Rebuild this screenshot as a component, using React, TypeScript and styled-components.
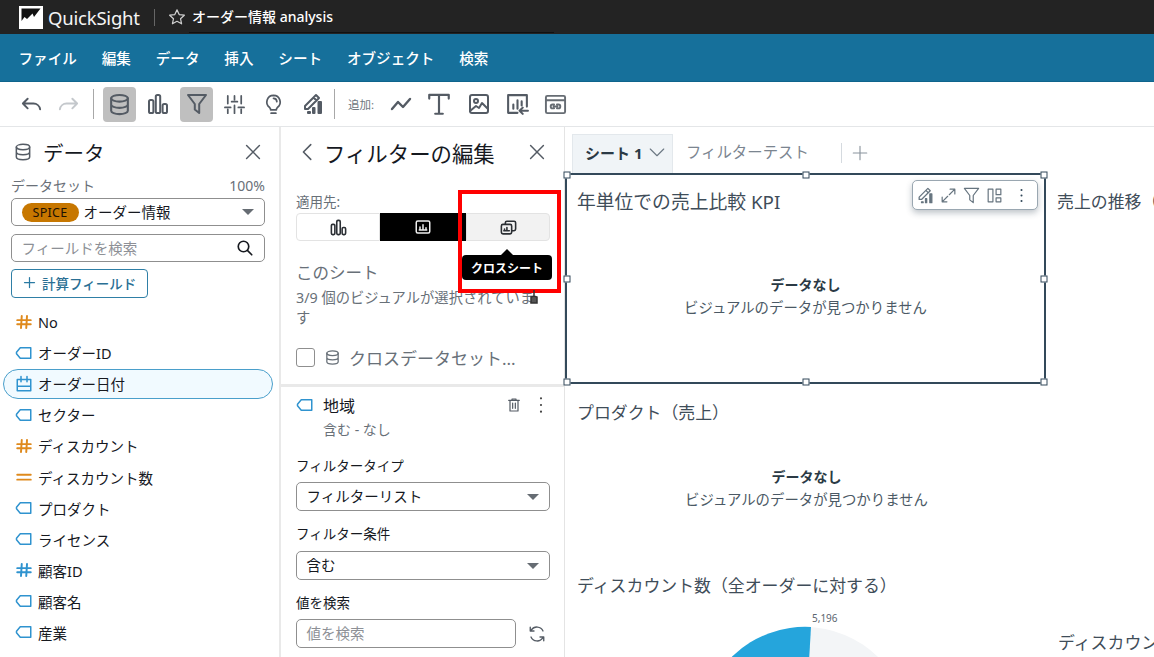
import React from "react";
import styled, { createGlobalStyle } from "styled-components";

const GlobalStyle = createGlobalStyle`
  html, body { margin: 0; padding: 0; background: #fff; }
  body {
    font-family: "Noto Sans", "Noto Sans CJK JP", sans-serif;
    color: #16191f;
    overflow: hidden;
  }
  * { box-sizing: border-box; }
`;

const Page = styled.div`
  position: relative;
  width: 1154px;
  height: 657px;
  overflow: hidden;
  display: flex;
  flex-direction: column;
`;

/* top bars */
const TopBar = styled.div`
  height: 34px;
  flex: none;
  background: #232323;
  display: flex;
  align-items: center;
  padding-left: 19px;
  color: #fff;
`;
const Brand = styled.span`
  font-size: 18.5px;
  margin-left: 5px;
  width: 106px;
  letter-spacing: -0.2px;
  color: #f4f4f4;
`;
const TopDivider = styled.span`
  width: 1px;
  height: 17px;
  background: #666;
  margin-right: 13px;
`;
const TitleWrap = styled.div`
  margin-left: 3px;
  width: 365px;
  height: 31px;
  line-height: 30px;
  font-size: 14px;
  font-weight: 500;
  margin-top: 1px;
  border-bottom: 1px solid #111;
  padding-left: 3px;
`;
const MenuBar = styled.div`
  height: 48px;
  flex: none;
  background: #16709b;
  display: flex;
  align-items: center;
  padding-left: 18.5px;
  gap: 24.8px;
  border-bottom: 1px solid #0f648c;
`;
const MenuItem = styled.span`
  color: #fff;
  font-size: 14.6px;
  font-weight: 500;
`;
const Toolbar = styled.div`
  height: 45px;
  flex: none;
  display: flex;
  align-items: center;
  border-bottom: 1px solid #e4e6e8;
  padding-left: 12px;
`;
const ToolSlot = styled.span<{ $w: number; $active?: boolean }>`
  width: ${(p) => p.$w}px;
  height: 35px;
  flex: none;
  display: flex;
  align-items: center;
  justify-content: center;
  border-radius: 4px;
  background: ${(p) => (p.$active ? "#bfbfbf" : "transparent")};
`;
const ToolDivider = styled.span`
  width: 1px;
  height: 30px;
  background: #a8a8a8;
  flex: none;
`;
const AddLabel = styled.span`
  font-size: 11.5px;
  color: #6f7780;
  width: 39px;
  margin-left: 13px;
  flex: none;
`;

/* main columns */
const Main = styled.div`
  flex: 1;
  display: flex;
  min-height: 0;
`;
const DataPanel = styled.aside`
  width: 281px;
  flex: none;
  border-right: 2px solid #e9e9e9;
  padding: 0 14px 0 11px;
`;
const FilterPanel = styled.aside`
  width: 284px;
  flex: none;
  border-right: 1px solid #e4e4e4;
`;
const PanelHead = styled.div<{ $h: number; $pad: number; $end: number }>`
  height: ${(p) => p.$h}px;
  display: flex;
  align-items: center;
  padding-left: ${(p) => p.$pad}px;
  padding-right: ${(p) => p.$end}px;
`;
const PanelTitle = styled.h2<{ $size: number; $left: number }>`
  margin: 0 0 0 ${(p) => p.$left}px;
  font-size: ${(p) => p.$size}px;
  font-weight: 400;
  flex: 1;
  white-space: nowrap;
`;
const CaptionRow = styled.div`
  display: flex;
  justify-content: space-between;
  font-size: 14px;
  color: #6a7078;
  height: 20px;
  line-height: 20px;
  margin-bottom: 2px;
`;
const Field = styled.div<{ $mt?: number; $h?: number; $width?: number }>`
  height: ${(p) => p.$h ?? 29}px;
  margin-top: ${(p) => p.$mt ?? 0}px;
  ${(p) => p.$width && `width: ${p.$width}px;`}
  border: 1px solid #8f8f8f;
  border-radius: 5px;
  display: flex;
  align-items: center;
  padding: 0 10px 0 9.5px;
  font-size: 14.5px;
  white-space: nowrap;
`;
const Pill = styled.span`
  width: 57px;
  height: 19px;
  border-radius: 10px;
  background: #c77700;
  color: #1d1204;
  font-size: 12.5px;
  display: flex;
  align-items: center;
  justify-content: center;
  margin-right: 5px;
  letter-spacing: 0.3px;
`;
const Grow = styled.span`
  flex: 1;
  margin-bottom: 2px;
`;
const Placeholder = styled.span`
  flex: 1;
  margin-bottom: 2px;
  color: #8d9096;
`;
const Caret = styled.span`
  width: 0;
  height: 0;
  border-left: 6px solid transparent;
  border-right: 6px solid transparent;
  border-top: 6px solid #666c73;
`;
const CalcButton = styled.button`
  display: flex;
  align-items: center;
  gap: 5px;
  width: 137px;
  height: 29px;
  margin-top: 7px;
  margin-bottom: 8px;
  padding: 0 0 2px 10px;
  background: #fff;
  border: 1px solid #2f7fa6;
  border-radius: 4px;
  color: #2a6f94;
  font: 500 13.5px "Noto Sans", "Noto Sans CJK JP", sans-serif;
  white-space: nowrap;
`;
const FieldRow = styled.div<{ $selected?: boolean }>`
  height: 31.1px;
  display: flex;
  align-items: center;
  gap: 5px;
  margin: 0 -8px 0 -8px;
  padding-left: 12px;
  font-size: 14.5px;
  border-radius: 15px;
  ${(p) =>
    p.$selected &&
    "background: #f1faff; border: 1px solid #4a9fcb; padding-left: 11px; height: 30px; margin-top: .5px; margin-bottom: .6px;"}
`;

/* filter panel */
const FilterTop = styled.div`
  height: 260px;
  padding: 0 14px 0 15px;
  border-bottom: 3px solid #e9e9e9;
`;
const SmallLabel = styled.div<{ $mt?: number; $dark?: boolean }>`
  font-size: 13.5px;
  line-height: 18px;
  margin-top: ${(p) => p.$mt ?? 0}px;
  color: ${(p) => (p.$dark ? "#16191f" : "#687078")};
`;
const Segments = styled.div`
  width: 254px;
  height: 28px;
  margin-top: 2px;
  display: grid;
  grid-template-columns: 84px 86px 84px;
`;
const Segment = styled.div<{ $kind: "first" | "on" | "last" }>`
  display: flex;
  align-items: center;
  justify-content: center;
  border: 1px solid #e3e3e3;
  background: ${(p) => (p.$kind === "on" ? "#000" : p.$kind === "last" ? "#f2f2f2" : "#fff")};
  border-radius: ${(p) =>
    p.$kind === "first" ? "4px 0 0 4px" : p.$kind === "last" ? "0 4px 4px 0" : "0"};
  ${(p) => p.$kind === "on" && "border-color: #000;"}
`;
const ScopeTitle = styled.div`
  margin-top: 21px;
  font-size: 16.5px;
  line-height: 22px;
  color: #687078;
`;
const ScopeText = styled.div`
  margin-top: 4px;
  width: 250px;
  font-size: 14.3px;
  line-height: 20px;
  color: #687078;
`;
const CrossRow = styled.div`
  margin-top: 18px;
  height: 22px;
  display: flex;
  align-items: center;
  gap: 8px;
  font-size: 17px;
  color: #687078;
  white-space: nowrap;
`;
const Checkbox = styled.span`
  width: 19px;
  height: 19px;
  border: 1px solid #8f8f8f;
  border-radius: 3px;
  margin-right: 1px;
  flex: none;
`;
const FilterCard = styled.div`
  padding: 0 14px 0 15px;
`;
const CardHead = styled.div`
  display: flex;
  align-items: center;
  height: 34px;
  margin-top: 1px;
  font-size: 16px;
`;
const CardName = styled.span`
  margin-left: 9px;
  flex: 1;
`;
const CardSub = styled.div`
  margin-left: 27px;
  font-size: 14px;
  line-height: 20px;
  color: #687078;
  margin-top: -2px;
`;
const SearchRow = styled.div`
  display: flex;
  align-items: center;
  gap: 12px;
  margin-top: 7px;
`;

/* sheet */
const Sheet = styled.section`
  flex: 1;
  min-width: 0;
`;
const Tabs = styled.div`
  height: 46px;
  display: flex;
  align-items: flex-end;
  padding-left: 7px;
`;
const ActiveTab = styled.div`
  width: 101px;
  height: 39px;
  background: #f0f4f7;
  border: 1px solid #e3e8ec;
  border-bottom: 0;
  display: flex;
  align-items: center;
  padding: 0 0 4px 12px;
  gap: 6px;
  font-size: 15px;
  font-weight: 700;
  color: #2b3a45;
  white-space: nowrap;
`;
const Tab = styled.div`
  height: 38px;
  line-height: 38px;
  margin-bottom: 1px;
  margin-left: 13px;
  width: 155px;
  font-size: 15.4px;
  color: #7b8590;
  white-space: nowrap;
`;
const TabDivider = styled.span`
  width: 1px;
  height: 20px;
  margin-bottom: 10px;
  background: #d5dadf;
  margin-right: 9px;
`;
const TabPlus = styled.span`
  height: 39px;
  padding-bottom: 2px;
  display: flex;
  align-items: center;
`;
const SheetGrid = styled.div`
  display: grid;
  grid-template-columns: 481px 1fr;
`;
const Column = styled.div`
  display: flex;
  flex-direction: column;
`;
const Visual = styled.div<{ $selected?: boolean; $h: number }>`
  position: relative;
  height: ${(p) => p.$h}px;
  padding: ${(p) => (p.$selected ? "15px 0 0 10px" : "17px 0 0 12px")};
  ${(p) => p.$selected && "border: 2px solid #33495a;"}
`;
const VisualTitle = styled.div<{ $size?: number; $mt?: number; $pl?: number }>`
  font-size: ${(p) => p.$size ?? 16.9}px;
  line-height: 24px;
  margin-top: ${(p) => p.$mt ?? 0}px;
  padding-left: ${(p) => p.$pl ?? 0}px;
  color: #3f4d59;
  white-space: nowrap;
`;
const Empty = styled.div<{ $mt: number }>`
  margin-top: ${(p) => p.$mt}px;
  text-align: center;
  color: #4b5965;
  font-size: 14.4px;
  line-height: 22.5px;
  padding-right: 10px;
  b {
    display: block;
    font-weight: 700;
    font-size: 14px;
    color: #2b3a45;
  }
`;
const Handle = styled.span<{ $x: string; $y: string }>`
  position: absolute;
  width: 7px;
  height: 7px;
  background: #fff;
  border: 1px solid #33495a;
  left: ${(p) => p.$x};
  top: ${(p) => p.$y};
  transform: translate(-50%, -50%);
`;
const VisualMenu = styled.div`
  position: absolute;
  left: 345px;
  top: 5px;
  width: 126px;
  height: 30px;
  border: 1px solid #9aa7b1;
  border-radius: 5px;
  background: #fff;
  box-shadow: 0 3px 6px rgba(40, 60, 75, 0.3);
  display: flex;
  align-items: center;
  padding-left: 3px;
  gap: 4px;
`;
const PieLabel = styled.div`
  position: absolute;
  left: 247px;
  top: 37px;
  font-size: 10px;
  color: #5c6670;
`;
const PieWrap = styled.div`
  position: relative;
  height: 100px;
`;
const Pie = styled.svg`
  position: absolute;
  left: 130px;
  top: 47px;
`;

/* overlays */
const RedBox = styled.div`
  position: absolute;
  left: 458px;
  top: 190px;
  width: 103px;
  height: 103px;
  border: 4px solid #f00;
`;
const Tooltip = styled.div`
  position: absolute;
  left: 462px;
  top: 255px;
  width: 90px;
  height: 25px;
  background: #000;
  color: #fff;
  border-radius: 4px;
  font-size: 12px;
  font-weight: 700;
  display: flex;
  align-items: center;
  justify-content: center;
  &::before {
    content: "";
    position: absolute;
    left: 39px;
    top: -6px;
    border-left: 6px solid transparent;
    border-right: 6px solid transparent;
    border-bottom: 6px solid #000;
  }
`;
const Cursor = styled.svg`
  position: absolute;
  left: 528px;
  top: 289px;
`;

/* icons */
type IP = { $s?: number; $c?: string; $w?: number; $ml?: number; $mr?: number };

const Ico = styled.svg.attrs<IP>((p) => ({
  viewBox: "0 0 24 24",
  fill: "none",
  width: p.$s ?? 24,
  height: p.$s ?? 24,
  stroke: p.$c ?? "#545b64",
  strokeWidth: p.$w ?? 2,
  strokeLinecap: "round",
  strokeLinejoin: "round",
}))<IP>`
  flex: none;
  display: block;
  margin-left: ${(p) => p.$ml ?? 0}px;
  margin-right: ${(p) => p.$mr ?? 0}px;
`;

const Db = (p: IP) => (
  <Ico {...p}>
    <ellipse cx="12" cy="6" rx="8" ry="3.2" />
    <path d="M4 6v12c0 1.800 3.600 3.200 8 3.200s8-1.400 8-3.200V6M4 12c0 1.800 3.600 3.200 8 3.200s8-1.400 8-3.200" />
  </Ico>
);
const Bars = (p: IP) => (
  <Ico {...p}>
    <rect x="3" y="8" width="4.4" height="13" rx="1.6" />
    <rect x="9.8" y="3" width="4.4" height="18" rx="1.6" />
    <rect x="16.6" y="12" width="4.4" height="9" rx="1.6" />
  </Ico>
);
const Funnel = (p: IP) => (
  <Ico {...p}>
    <path d="M3 3h18l-6.800 9v9l-4.400-3.500V12z" />
  </Ico>
);
const Sliders = (p: IP) => (
  <Ico {...p}>
    <path d="M5 3v8M5 17v4M12 3v4M12 13v8M19 3v8M19 17v4M2 15h6M9 9h6M16 15h6" />
  </Ico>
);
const Bulb = (p: IP) => (
  <Ico {...p}>
    <path d="M12 2.500a7 7 0 0 0-4 12.700c.7.600 1 1.200 1 2.300h6c0-1.100.3-1.700 1-2.300a7 7 0 0 0-4-12.700zM9.500 21h5M12 5.500a3.600 3.600 0 0 1 3.500 3.500" />
  </Ico>
);
const Forecast = (p: IP) => (
  <Ico {...p}>
    <path d="M15 3l3 3L7 17H4v-3zM12.500 5.500l3 3" />
    <path d="M7 21h2v-1H7zM12 21h1.500v-5H12zM17.500 21H20V10h-2.500z" fill={p.$c ?? "#545b64"} />
  </Ico>
);
const Caption = (p: IP) => (
  <Ico {...p}>
    <rect x="3" y="4" width="18" height="16" rx="2" />
    <path d="M8 15v-3M12 15V9M16 15v-2M7 16h10" />
  </Ico>
);
const Cross = (p: IP) => (
  <Ico {...p}>
    <rect x="8" y="4" width="13" height="12" rx="2" />
    <rect x="3" y="8" width="13" height="12" rx="2" fill="#f2f2f2" />
    <path d="M7 16v-2M10 16v-4M13 16H6" />
  </Ico>
);
const Close = (p: IP) => (
  <Ico {...p}>
    <path d="M5 5l14 14M19 5L5 19" />
  </Ico>
);
const Tag = (p: IP) => (
  <Ico $s={18} $c="#2f93cf" {...p}>
    <path d="M7 5h14v14H7l-5-6v-2z" />
  </Ico>
);
const Hash = ({ $c = "#df8a1d" }: { $c?: string }) => (
  <Ico $s={18} $c={$c} $w={2.6}>
    <path d="M9 4L8 20M16 4l-1 16M3 9.500h18M3 15h18" />
  </Ico>
);
const Equals = () => (
  <Ico $s={18} $c="#df8a1d" $w={2.6}>
    <path d="M3 9h18M3 15.500h18" />
  </Ico>
);
const Calendar = () => (
  <Ico $s={18} $c="#2f93cf">
    <path d="M3 6h18v15H3zM3 15h18M8 2v7M16 2v7" />
  </Ico>
);

const fields: { name: string; icon: React.ReactNode; selected?: boolean }[] = [
  { name: "No", icon: <Hash /> },
  { name: "オーダーID", icon: <Tag /> },
  { name: "オーダー日付", icon: <Calendar />, selected: true },
  { name: "セクター", icon: <Tag /> },
  { name: "ディスカウント", icon: <Hash /> },
  { name: "ディスカウント数", icon: <Equals /> },
  { name: "プロダクト", icon: <Tag /> },
  { name: "ライセンス", icon: <Tag /> },
  { name: "顧客ID", icon: <Hash $c="#2f93cf" /> },
  { name: "顧客名", icon: <Tag /> },
  { name: "産業", icon: <Tag /> },
];

const menus = ["ファイル", "編集", "データ", "挿入", "シート", "オブジェクト", "検索"];

export default function App() {
  return (
    <Page>
      <GlobalStyle />
      <TopBar>
        <svg width="24" height="23" viewBox="0 0 24 23">
          <rect width="24" height="23" fill="#fff" />
          <path d="M2.500 2.500h19L15 11l-1.500-3.500L8 13 5.500 11l-3 4z" fill="#111" />
        </svg>
        <Brand>QuickSight</Brand>
        <TopDivider />
        <Ico $s={18} $c="#d0d0d0" $w={1.6}>
          <path d="M12 2.500l2.900 6.300 6.900.8-5.100 4.700 1.400 6.800-6.100-3.400-6.100 3.400 1.400-6.800-5.100-4.700 6.900-.8z" />
        </Ico>
        <TitleWrap>オーダー情報 analysis</TitleWrap>
      </TopBar>
      <MenuBar>
        {menus.map((m) => (
          <MenuItem key={m}>{m}</MenuItem>
        ))}
      </MenuBar>
      <Toolbar>
        <ToolSlot $w={38}>
          <Ico $s={23}>
            <path d="M8 6L3 11l5 5M3 11h11a7 7 0 0 1 7 6" />
          </Ico>
        </ToolSlot>
        <ToolSlot $w={37}>
          <Ico $s={23} $c="#c4c8cc">
            <path d="M16 6l5 5-5 5M21 11H10a7 7 0 0 0-7 6" />
          </Ico>
        </ToolSlot>
        <ToolSlot $w={6} />
        <ToolDivider />
        <ToolSlot $w={9} />
        <ToolSlot $w={33} $active>
          <Db $s={25} />
        </ToolSlot>
        <ToolSlot $w={44}>
          <Bars $s={24} />
        </ToolSlot>
        <ToolSlot $w={33} $active>
          <Funnel $s={24} />
        </ToolSlot>
        <ToolSlot $w={43}>
          <Sliders $s={23} $w={1.8} />
        </ToolSlot>
        <ToolSlot $w={35}>
          <Bulb $s={23} $w={1.8} />
        </ToolSlot>
        <ToolSlot $w={43}>
          <Forecast $s={24} />
        </ToolSlot>
        <ToolDivider />
        <AddLabel>追加:</AddLabel>
        <ToolSlot $w={28}>
          <Ico $s={24} $w={2.4}>
            <path d="M3 17l6-7 5 5 7-8" />
          </Ico>
        </ToolSlot>
        <ToolSlot $w={47}>
          <Ico $s={26}>
            <path d="M3 7V3.500h18V7M12 3.500V21M8.500 21h7" />
          </Ico>
        </ToolSlot>
        <ToolSlot $w={34}>
          <Ico $s={24}>
            <rect x="3" y="3" width="18" height="18" rx="2" />
            <circle cx="9" cy="9" r="2" />
            <path d="M3 19l6-5 3 2 3-5 6 6" />
          </Ico>
        </ToolSlot>
        <ToolSlot $w={43}>
          <Ico $s={25}>
            <path d="M12 20H3V3h18v11M8 16v-4M12 16V8M16 13V9M14 18h8M17 15l-3 3 3 3" />
          </Ico>
        </ToolSlot>
        <ToolSlot $w={33}>
          <Ico $s={23} $c="#666c73">
            <rect x="2" y="3" width="20" height="18" rx="1.5" />
            <path d="M2 7.500h20M10.500 12H9a2 2 0 0 0 0 4h1.500M13.500 12H15a2 2 0 0 1 0 4h-1.500M10 14h4" />
          </Ico>
        </ToolSlot>
      </Toolbar>
      <Main>
        <DataPanel>
          <PanelHead $h={49} $pad={2} $end={1}>
            <Db $s={20} $w={1.8} />
            <PanelTitle $size={20.5} $left={10}>データ</PanelTitle>
            <Close $s={22} $w={1.6} />
          </PanelHead>
          <CaptionRow>
            <span>データセット</span>
            <span>100%</span>
          </CaptionRow>
          <Field $h={28}>
            <Pill>SPICE</Pill>
            <Grow>オーダー情報</Grow>
            <Caret />
          </Field>
          <Field $mt={8} $h={28}>
            <Placeholder>フィールドを検索</Placeholder>
            <Ico $s={18} $c="#16191f" $w={2.2}>
              <circle cx="10" cy="10" r="7" />
              <path d="M15.500 15.500L21 21" />
            </Ico>
          </Field>
          <CalcButton>
            <Ico $s={15} $c="#2a7aa3" $w={2}>
              <path d="M12 4v16M4 12h16" />
            </Ico>
            計算フィールド
          </CalcButton>
          {fields.map((f) => (
            <FieldRow key={f.name} $selected={f.selected}>
              {f.icon}
              {f.name}
            </FieldRow>
          ))}
        </DataPanel>
        <FilterPanel>
          <FilterTop>
            <PanelHead $h={50} $pad={0} $end={2}>
              <Ico $s={22} $w={1.7} $ml={1}>
                <path d="M15 4l-8 8 8 8" />
              </Ico>
              <PanelTitle $size={21.4} $left={5}>フィルターの編集</PanelTitle>
              <Close $s={22} $w={1.6} />
            </PanelHead>
            <SmallLabel $mt={16}>適用先:</SmallLabel>
            <Segments>
              <Segment $kind="first">
                <Bars $s={19} $c="#2b2f34" />
              </Segment>
              <Segment $kind="on">
                <Caption $s={18} $c="#eee" />
              </Segment>
              <Segment $kind="last">
                <Cross $s={19} $c="#2b2f34" />
              </Segment>
            </Segments>
            <ScopeTitle>このシート</ScopeTitle>
            <ScopeText>3/9 個のビジュアルが選択されています</ScopeText>
            <CrossRow>
              <Checkbox />
              <Db $s={17} $c="#687078" $w={1.8} />
              クロスデータセット...
            </CrossRow>
          </FilterTop>
          <FilterCard>
            <CardHead>
              <Tag />
              <CardName>地域</CardName>
              <Ico $s={16} $w={1.8}>
                <path d="M4 5h16M9 5V3h6v2M6 5v16h12V5M10 9v8M14 9v8" />
              </Ico>
              <Ico $s={20} $c="#444" $w={2.6} $ml={9} $mr={-1}>
                <path d="M12 4h.01M12 12h.01M12 20h.01" />
              </Ico>
            </CardHead>
            <CardSub>含む - なし</CardSub>
            <SmallLabel $mt={17} $dark>フィルタータイプ</SmallLabel>
            <Field $mt={7} $h={29}>
              <Grow>フィルターリスト</Grow>
              <Caret />
            </Field>
            <SmallLabel $mt={14} $dark>フィルター条件</SmallLabel>
            <Field $mt={8} $h={29}>
              <Grow>含む</Grow>
              <Caret />
            </Field>
            <SmallLabel $mt={14} $dark>値を検索</SmallLabel>
            <SearchRow>
              <Field $h={29} $width={220}>
                <Placeholder>値を検索</Placeholder>
              </Field>
              <Ico $s={18} $w={1.8}>
                <path d="M20 8a9 9 0 0 0-15.500-1.500L3 8M3 3v5h5M4 16a9 9 0 0 0 15.500 1.500L21 16M21 21v-5h-5" />
              </Ico>
            </SearchRow>
          </FilterCard>
        </FilterPanel>
        <Sheet>
          <Tabs>
            <ActiveTab>
              シート 1
              <Ico $s={18} $c="#6b7883" $w={1.5}>
                <path d="M3 8l9 9 9-9" />
              </Ico>
            </ActiveTab>
            <Tab>フィルターテスト</Tab>
            <TabDivider />
            <TabPlus>
              <Ico $s={18} $c="#8a949d" $w={1.5}>
                <path d="M12 3v18M3 12h18" />
              </Ico>
            </TabPlus>
          </Tabs>
          <SheetGrid>
            <Column>
              <Visual $selected $h={211}>
                <VisualTitle $size={18.8}>年単位での売上比較 KPI</VisualTitle>
                <Empty $mt={60}>
                  <b>データなし</b>
                  ビジュアルのデータが見つかりません
                </Empty>
                <Handle $x="0%" $y="0%" />
                <Handle $x="50%" $y="0%" />
                <Handle $x="100%" $y="0%" />
                <Handle $x="0%" $y="50%" />
                <Handle $x="100%" $y="50%" />
                <Handle $x="0%" $y="100%" />
                <Handle $x="50%" $y="100%" />
                <Handle $x="100%" $y="100%" />
                <VisualMenu>
                  <Forecast $s={19} $c="#66747f" $w={1.6} />
                  <Ico $s={19} $c="#66747f" $w={1.5}>
                    <path d="M14 4h6v6M20 4l-7 7M10 20H4v-6M4 20l7-7" />
                  </Ico>
                  <Funnel $s={19} $c="#66747f" $w={1.5} />
                  <Ico $s={19} $c="#66747f" $w={1.5}>
                    <path d="M4 4h6v16H4zM14 4h6v7h-6zM14 15h6v5h-6z" />
                  </Ico>
                  <Ico $s={19} $c="#33495a" $w={2.6} $ml={4}>
                    <path d="M12 5h.01M12 12h.01M12 19h.01" />
                  </Ico>
                </VisualMenu>
              </Visual>
              <Visual $h={190}>
                <VisualTitle>プロダクト（売上）</VisualTitle>
                <Empty $mt={41}>
                  <b>データなし</b>
                  ビジュアルのデータが見つかりません
                </Empty>
              </Visual>
              <PieWrap>
                <VisualTitle $pl={12}>ディスカウント数（全オーダーに対する）</VisualTitle>
                <PieLabel>5,196</PieLabel>
                <Pie width="220" height="220" viewBox="-110 -110 220 220">
                  <circle r="104" fill="#f3f5f7" />
                  <path d="M0 0L6 -104A104 104 0 0 0 -104 0z" fill="#25a5dc" />
                </Pie>
              </PieWrap>
            </Column>
            <Column>
              <VisualTitle $mt={17} $pl={11}>売上の推移（</VisualTitle>
              <VisualTitle $mt={417} $pl={12}>ディスカウント</VisualTitle>
            </Column>
          </SheetGrid>
        </Sheet>
      </Main>
      <RedBox />
      <Tooltip>クロスシート</Tooltip>
      <Cursor width="12" height="18" viewBox="0 0 12 18">
        <path d="M6 1v6M3 8l3-1 3 1v6H3z" stroke="#333" strokeWidth="1.5" fill="#555" />
      </Cursor>
    </Page>
  );
}
